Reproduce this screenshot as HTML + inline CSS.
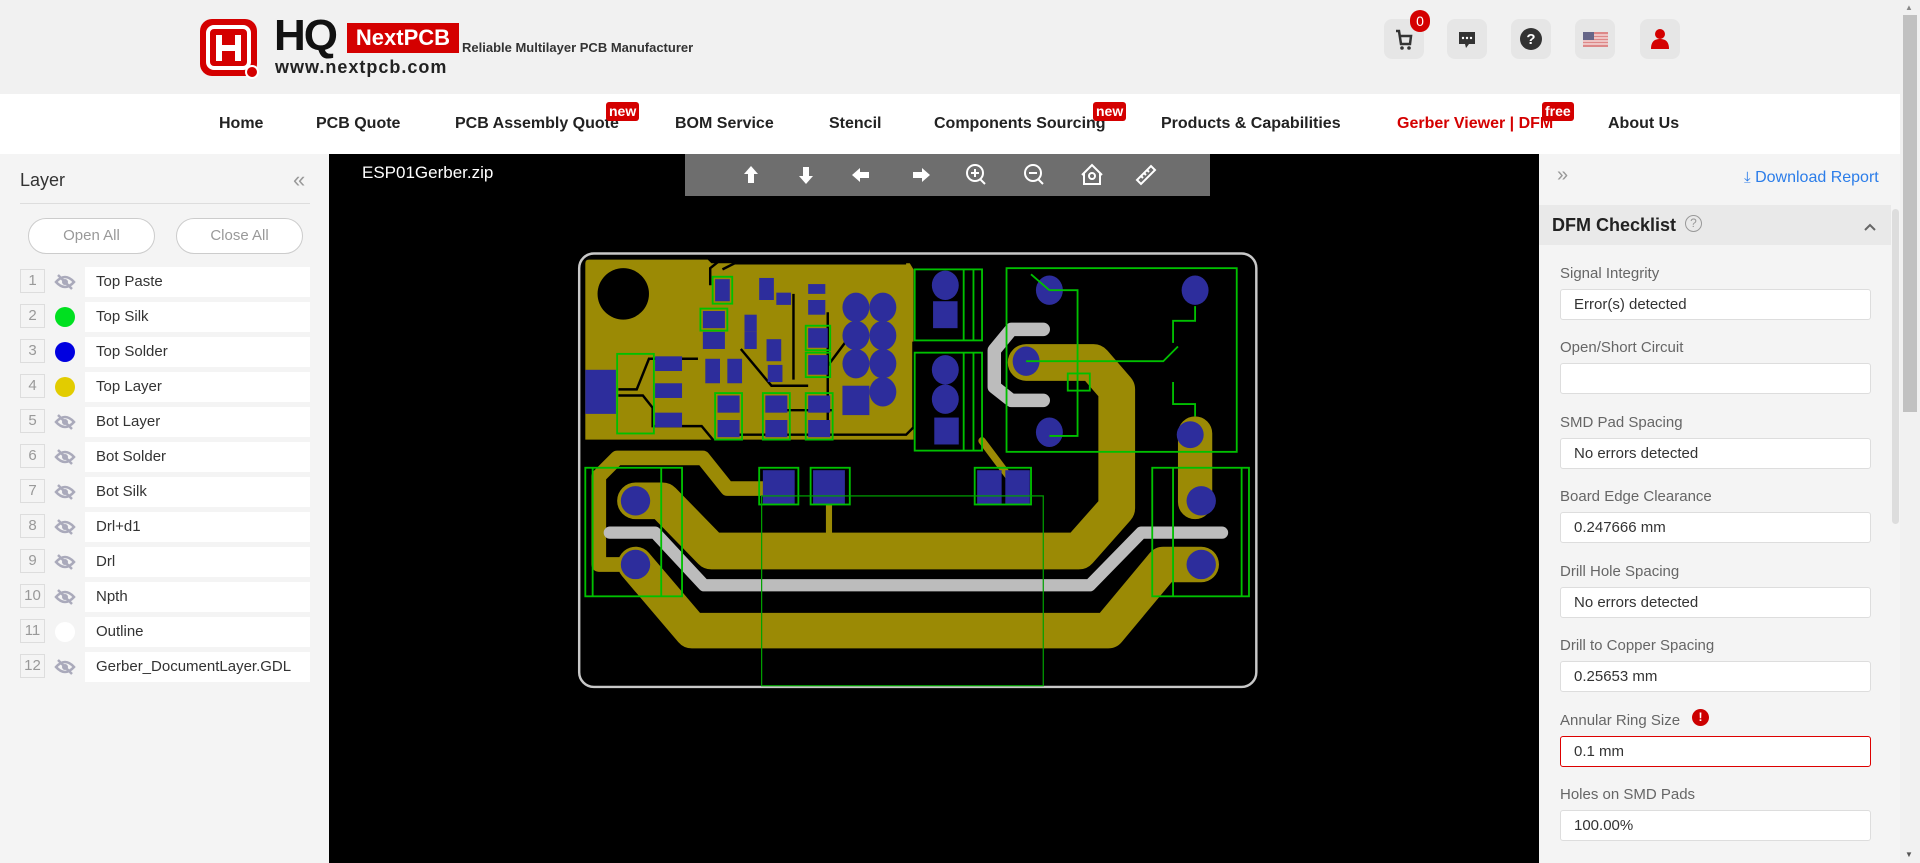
<!DOCTYPE html>
<html><head><meta charset="utf-8"><style>
*{box-sizing:border-box;margin:0;padding:0}
body{width:1920px;height:863px;overflow:hidden;font-family:"Liberation Sans",Arial,sans-serif;background:#f4f4f4;position:relative}
.abs{position:absolute}
#hdr{left:0;top:0;width:1900px;height:94px;background:#f1f1f1}
#nav{left:0;top:94px;width:1900px;height:60px;background:#fff}
.nv{position:absolute;top:115px;font-size:16px;font-weight:bold;color:#222;white-space:nowrap}
.bd{position:absolute;top:102px;height:19px;background:#d40000;color:#fff;font-size:14px;font-weight:bold;border-radius:3px;padding:0 3px;line-height:19px}
.ib{position:absolute;top:19px;width:40px;height:40px;background:#e6e6e6;border-radius:8px}
#left{left:0;top:154px;width:329px;height:709px;background:#f4f4f4}
.row{position:absolute;left:20px;height:30px;width:290px}
.num{position:absolute;left:0;top:2px;width:25px;height:24px;border:1px solid #ddd;color:#999;font-size:15px;text-align:center;line-height:22px}
.nm{position:absolute;left:65px;top:0;width:225px;height:30px;background:#fff;font-size:15px;color:#333;line-height:30px;padding-left:11px}
.dot{position:absolute;left:35px;top:5px;width:20px;height:20px;border-radius:50%}
.eye{position:absolute;left:34px;top:5px}
#canvas{left:329px;top:154px;width:1210px;height:709px;background:#000}
#right{left:1539px;top:154px;width:361px;height:709px;background:#f4f4f4}
.lb{position:absolute;left:21px;font-size:15px;color:#666}
.in{position:absolute;left:21px;width:311px;height:31px;background:#fff;border:1px solid #ddd;border-radius:3px;font-size:15px;color:#333;line-height:29px;padding-left:13px}
</style></head><body>
<div id="hdr" class="abs"></div>
<!-- logo -->
<svg class="abs" style="left:200px;top:19px" width="60" height="60" viewBox="0 0 60 60">
<rect x="0" y="0" width="57" height="57" rx="12" fill="#d40000"/>
<rect x="8" y="8" width="41" height="41" rx="6" fill="none" stroke="#fff" stroke-width="4"/>
<path d="M19 16v26M38 16v26M19 29h19" stroke="#fff" stroke-width="6" fill="none"/>
<circle cx="52" cy="53" r="6" fill="#d40000" stroke="#fff" stroke-width="2"/>
</svg>
<div class="abs" style="left:274px;top:14px;font-size:44px;font-weight:bold;color:#111;letter-spacing:-2px;line-height:44px">HQ</div>
<div class="abs" style="left:347px;top:23px;width:112px;height:30px;background:#d40000;color:#fff;font-size:22px;font-weight:bold;line-height:30px;text-align:center">NextPCB</div>
<div class="abs" style="left:275px;top:57px;font-size:18px;font-weight:bold;color:#222;letter-spacing:1px">www.nextpcb.com</div>
<div class="abs" style="left:462px;top:40px;font-size:13px;font-weight:bold;color:#333">Reliable Multilayer PCB Manufacturer</div>
<div class="ib" style="left:1384px"><svg width="40" height="40"><path d="M12 12h3l2 13h9l1-8h-11" fill="none" stroke="#333" stroke-width="2.5"/><circle cx="18" cy="29" r="1.8" fill="#333"/><circle cx="25" cy="29" r="1.8" fill="#333"/></svg></div>
<div class="abs" style="left:1410px;top:10px;width:20px;height:22px;border-radius:10px;background:#d40000;color:#fff;font-size:14px;text-align:center;line-height:22px">0</div>
<div class="ib" style="left:1447px"><svg width="40" height="40"><path d="M12 13h16v12h-6l-3 4-1-4h-6z" fill="#333"/><circle cx="16" cy="19" r="1.2" fill="#fff"/><circle cx="20" cy="19" r="1.2" fill="#fff"/><circle cx="24" cy="19" r="1.2" fill="#fff"/></svg></div>
<div class="ib" style="left:1511px"><svg width="40" height="40"><circle cx="20" cy="20" r="11" fill="#333"/><text x="20" y="25" font-size="15" font-weight="bold" fill="#fff" text-anchor="middle" font-family="Liberation Sans">?</text></svg></div>
<div class="ib" style="left:1575px"><svg width="40" height="40"><rect x="8" y="13" width="25" height="15" fill="#d88"/><path d="M8 16h25M8 19h25M8 22h25M8 25h25" stroke="#fff" stroke-width="1"/><rect x="8" y="13" width="11" height="8" fill="#668"/></svg></div>
<div class="ib" style="left:1640px"><svg width="40" height="40"><circle cx="20" cy="15" r="5" fill="#d40000"/><path d="M11 30c0-8 4-10 9-10s9 2 9 10z" fill="#d40000"/></svg></div>

<div id="nav" class="abs"></div>
<div class="nv" style="left:219px">Home</div>
<div class="nv" style="left:316px">PCB Quote</div>
<div class="nv" style="left:455px">PCB Assembly Quote</div>
<div class="bd" style="left:606px">new</div>
<div class="nv" style="left:675px">BOM Service</div>
<div class="nv" style="left:829px">Stencil</div>
<div class="nv" style="left:934px">Components Sourcing</div>
<div class="bd" style="left:1093px">new</div>
<div class="nv" style="left:1161px">Products &amp; Capabilities</div>
<div class="nv" style="left:1397px;color:#d40000;font-weight:bold">Gerber Viewer | DFM</div>
<div class="bd" style="left:1542px">free</div>
<div class="nv" style="left:1608px">About Us</div>

<div id="left" class="abs">
<div class="abs" style="left:20px;top:16px;font-size:18px;color:#333">Layer</div>
<div class="abs" style="left:293px;top:13px;font-size:22px;color:#999">«</div>
<div class="abs" style="left:20px;top:49px;width:290px;height:1px;background:#ddd"></div>
<div class="abs" style="left:28px;top:64px;width:127px;height:36px;border:1px solid #ccc;border-radius:18px;background:#fff;color:#999;font-size:15px;text-align:center;line-height:34px">Open All</div>
<div class="abs" style="left:176px;top:64px;width:127px;height:36px;border:1px solid #ccc;border-radius:18px;background:#fff;color:#999;font-size:15px;text-align:center;line-height:34px">Close All</div>
</div>
<div id="rows"></div>

<div id="canvas" class="abs"></div>
<div class="abs" style="left:362px;top:163px;font-size:17px;color:#fff">ESP01Gerber.zip</div>
<div class="abs" style="left:685px;top:154px;width:525px;height:42px;background:#6e6e6e"></div>
<svg class="abs" style="left:0;top:0" width="1920" height="863">
<g fill="#fff" stroke="none">
<path d="M751 166l-7 8h4v9h6v-9h4z"/>
<path d="M806 184l-7-8h4v-9h6v9h4z"/>
<path d="M852 175l8-7v4h9v6h-9v4z"/>
<path d="M930 175l-8-7v4h-9v6h9v4z"/>
</g>
<g fill="none" stroke="#fff" stroke-width="2">
<circle cx="975" cy="173" r="8"/><path d="M980 179l5 5M971 173h8M975 169v8"/>
<circle cx="1033" cy="173" r="8"/><path d="M1038 179l5 5M1029 173h8"/>
<path d="M1082 175l10-10 10 10M1084 173v11h16v-11"/><circle cx="1092" cy="176" r="3"/>
<path d="M1137 180l14-14 4 4-14 14z"/><path d="M1141 176l2 2M1144 173l2 2M1147 170l2 2"/>
</g>
<g transform="scale(1.22449)">
<rect x="473" y="207" width="553" height="354" rx="12" fill="none" stroke="#c8c8c8" stroke-width="2"/>
<!-- copper -->
<path d="M478 215q0-3 3-3h97l3 3h162l3 5v139H478z" fill="#9b8a05"/>
<circle cx="509" cy="240" r="21" fill="#000"/>
<g fill="none" stroke="#000" stroke-width="2">
<path d="M580 233v-14l10-8M590 220l10-5h140"/>
<path d="M505 318h15l10-25h40M505 323h20l8 10v15h40l10 12"/>
<path d="M605 285l25 30h30M648 240v70M676 255v90M630 335h50M600 355h140l6-6v-70"/>
<path d="M690 280l-15 20"/>
</g>
<g fill="none" stroke="#9b8a05" stroke-linejoin="round" stroke-linecap="round">
<path d="M519 409h22l40 41h300l31-35v-97l-19-22h-55" stroke-width="30"/>
<path d="M519 461l46 54h340l45-54h31" stroke-width="29"/>
<path d="M976 354v56" stroke-width="28"/>
<path d="M519 461h-30v-72l15-15h70l20 25h42" stroke-width="12"/>
<path d="M802 360l30 40" stroke-width="6"/>
<path d="M677 405v30" stroke-width="5"/>
</g>
<g fill="none" stroke="#bcbcbc" stroke-linecap="round" stroke-linejoin="round">
<path d="M852 269h-26l-14 17v30l14 11h26" stroke-width="11"/>
<path d="M498 435h37l40 43h315l42-43h66" stroke-width="10"/>
</g>
<!-- pads -->
<g fill="#2d2d9c">
<circle cx="519" cy="409" r="12"/><circle cx="519" cy="461" r="12"/>
<circle cx="981" cy="409" r="12"/><circle cx="981" cy="461" r="12"/><circle cx="972" cy="355" r="11"/>
<ellipse cx="857" cy="237" rx="11" ry="12"/><ellipse cx="976" cy="237" rx="11" ry="12"/><ellipse cx="838" cy="295" rx="11" ry="12"/><ellipse cx="857" cy="353" rx="11" ry="12"/>
<ellipse cx="699" cy="251" rx="11" ry="12"/><ellipse cx="721" cy="251" rx="11" ry="12"/><ellipse cx="699" cy="274" rx="11" ry="12"/><ellipse cx="721" cy="274" rx="11" ry="12"/><ellipse cx="699" cy="297" rx="11" ry="12"/><ellipse cx="721" cy="297" rx="11" ry="12"/><ellipse cx="721" cy="320" rx="11" ry="12"/>
<rect x="688" y="315" width="22" height="24"/>
<ellipse cx="772" cy="233" rx="11" ry="12"/><rect x="762" y="246" width="20" height="22"/>
<ellipse cx="772" cy="302" rx="11" ry="12"/><ellipse cx="772" cy="326" rx="11" ry="12"/><rect x="763" y="341" width="20" height="22"/>
<rect x="623" y="384" width="26" height="28"/><rect x="664" y="384" width="26" height="28"/><rect x="798" y="384" width="20" height="28"/><rect x="821" y="384" width="20" height="28"/>
<rect x="478" y="302" width="25" height="36"/>
<rect x="584" y="228" width="12" height="18"/><rect x="620" y="227" width="12" height="18"/><rect x="634" y="239" width="12" height="10"/><rect x="660" y="232" width="14" height="8"/><rect x="660" y="245" width="14" height="12"/>
<rect x="574" y="254" width="18" height="14"/><rect x="608" y="257" width="10" height="14"/><rect x="574" y="271" width="18" height="14"/><rect x="608" y="271" width="10" height="14"/><rect x="626" y="277" width="12" height="18"/><rect x="660" y="268" width="16" height="16"/>
<rect x="535" y="291" width="22" height="12"/><rect x="535" y="313" width="22" height="12"/><rect x="535" y="337" width="22" height="12"/>
<rect x="576" y="293" width="12" height="20"/><rect x="594" y="293" width="12" height="20"/><rect x="627" y="298" width="12" height="14"/><rect x="660" y="290" width="16" height="16"/>
<rect x="586" y="323" width="18" height="14"/><rect x="586" y="343" width="18" height="14"/><rect x="625" y="323" width="18" height="14"/><rect x="625" y="343" width="18" height="14"/><rect x="660" y="323" width="18" height="14"/><rect x="660" y="343" width="18" height="14"/>
</g>
<!-- silk -->
<g fill="none" stroke="#00c000" stroke-width="1.5">
<rect x="747" y="220" width="55" height="58"/><path d="M787 220v58M795 220v58"/>
<rect x="747" y="288" width="55" height="80"/><path d="M787 288v80M795 288v80"/>
<rect x="822" y="219" width="188" height="150"/>
<rect x="478" y="382" width="79" height="105"/><path d="M540 382v105M484 382v105"/>
<rect x="941" y="382" width="79" height="105"/><path d="M958 382v105M1014 382v105"/>
<rect x="504" y="289" width="30" height="65"/>
<path d="M857 237h23v119h-23M838 295h112l12-12M976 250v12h-18v18M958 312v18h18v10M842 224l15 13"/>
<rect x="872" y="305" width="18" height="14"/>
<rect x="620" y="382" width="32" height="30"/><rect x="662" y="382" width="32" height="30"/><rect x="796" y="382" width="46" height="30"/>
<rect x="582" y="226" width="16" height="22"/><rect x="572" y="252" width="22" height="18"/><rect x="658" y="266" width="20" height="20"/><rect x="658" y="288" width="20" height="20"/><rect x="584" y="321" width="22" height="38"/><rect x="623" y="321" width="22" height="38"/><rect x="658" y="321" width="22" height="38"/>
</g>
<rect x="622" y="405" width="230" height="155" fill="none" stroke="#00a000" stroke-width="1"/>
</g>
</svg>

<div id="right" class="abs">
<div class="abs" style="left:18px;top:10px;font-size:20px;color:#999">»</div>
<div class="abs" style="left:205px;top:15px;font-size:16px;color:#2b7de9"><span style="font-size:15px">⤓</span> Download Report</div>
<div class="abs" style="left:0;top:51px;width:352px;height:40px;background:#e9e9e9"></div>
<div class="abs" style="left:13px;top:61px;font-size:18px;font-weight:bold;color:#222">DFM Checklist</div>
<div class="abs" style="left:146px;top:61px;width:17px;height:17px;border:1px solid #999;border-radius:50%;color:#999;font-size:12px;text-align:center;line-height:15px">?</div>
<svg class="abs" style="left:324px;top:68px" width="14" height="10"><path d="M2 8l5-5 5 5" fill="none" stroke="#666" stroke-width="2"/></svg>
<div class="abs" style="left:353px;top:55px;width:7px;height:315px;background:#ddd;border-radius:4px"></div>
<div class="lb" style="top:111px">Signal Integrity</div><div class="in" style="top:135px">Error(s) detected</div>
<div class="lb" style="top:185px">Open/Short Circuit</div><div class="in" style="top:209px"></div>
<div class="lb" style="top:260px">SMD Pad Spacing</div><div class="in" style="top:284px">No errors detected</div>
<div class="lb" style="top:334px">Board Edge Clearance</div><div class="in" style="top:358px">0.247666 mm</div>
<div class="lb" style="top:409px">Drill Hole Spacing</div><div class="in" style="top:433px">No errors detected</div>
<div class="lb" style="top:483px">Drill to Copper Spacing</div><div class="in" style="top:507px">0.25653 mm</div>
<div class="lb" style="top:558px">Annular Ring Size</div>
<div class="abs" style="left:153px;top:555px;width:17px;height:17px;border-radius:50%;background:#c00;color:#fff;font-size:12px;font-weight:bold;text-align:center;line-height:17px">!</div>
<div class="in" style="top:582px;border-color:#d00">0.1 mm</div>
<div class="lb" style="top:632px">Holes on SMD Pads</div><div class="in" style="top:656px">100.00%</div>
</div>
<div class="abs" style="left:1900px;top:0;width:20px;height:863px;background:#f1f1f1"></div>
<div class="abs" style="left:1903px;top:15px;width:14px;height:397px;background:#c1c1c1"></div>
<div class="abs" style="left:1905px;top:3px;font-size:8px;color:#888">▲</div>
<div class="abs" style="left:1905px;top:850px;font-size:8px;color:#555">▼</div>

<div class="row" style="top:267px"><div class="num">1</div><svg class="eye" width="22" height="20"><path d="M2 10q9-10 18 0q-9 10-18 0z" fill="none" stroke="#aab" stroke-width="2.5"/><circle cx="11" cy="10" r="3" fill="#aab"/><path d="M4 3l14 14" stroke="#aab" stroke-width="2.5"/></svg><div class="nm">Top Paste</div></div>
<div class="row" style="top:302px"><div class="num">2</div><div class="dot" style="background:#00e020"></div><div class="nm">Top Silk</div></div>
<div class="row" style="top:337px"><div class="num">3</div><div class="dot" style="background:#0000e0"></div><div class="nm">Top Solder</div></div>
<div class="row" style="top:372px"><div class="num">4</div><div class="dot" style="background:#e2cc00"></div><div class="nm">Top Layer</div></div>
<div class="row" style="top:407px"><div class="num">5</div><svg class="eye" width="22" height="20"><path d="M2 10q9-10 18 0q-9 10-18 0z" fill="none" stroke="#aab" stroke-width="2.5"/><circle cx="11" cy="10" r="3" fill="#aab"/><path d="M4 3l14 14" stroke="#aab" stroke-width="2.5"/></svg><div class="nm">Bot Layer</div></div>
<div class="row" style="top:442px"><div class="num">6</div><svg class="eye" width="22" height="20"><path d="M2 10q9-10 18 0q-9 10-18 0z" fill="none" stroke="#aab" stroke-width="2.5"/><circle cx="11" cy="10" r="3" fill="#aab"/><path d="M4 3l14 14" stroke="#aab" stroke-width="2.5"/></svg><div class="nm">Bot Solder</div></div>
<div class="row" style="top:477px"><div class="num">7</div><svg class="eye" width="22" height="20"><path d="M2 10q9-10 18 0q-9 10-18 0z" fill="none" stroke="#aab" stroke-width="2.5"/><circle cx="11" cy="10" r="3" fill="#aab"/><path d="M4 3l14 14" stroke="#aab" stroke-width="2.5"/></svg><div class="nm">Bot Silk</div></div>
<div class="row" style="top:512px"><div class="num">8</div><svg class="eye" width="22" height="20"><path d="M2 10q9-10 18 0q-9 10-18 0z" fill="none" stroke="#aab" stroke-width="2.5"/><circle cx="11" cy="10" r="3" fill="#aab"/><path d="M4 3l14 14" stroke="#aab" stroke-width="2.5"/></svg><div class="nm">Drl+d1</div></div>
<div class="row" style="top:547px"><div class="num">9</div><svg class="eye" width="22" height="20"><path d="M2 10q9-10 18 0q-9 10-18 0z" fill="none" stroke="#aab" stroke-width="2.5"/><circle cx="11" cy="10" r="3" fill="#aab"/><path d="M4 3l14 14" stroke="#aab" stroke-width="2.5"/></svg><div class="nm">Drl</div></div>
<div class="row" style="top:582px"><div class="num">10</div><svg class="eye" width="22" height="20"><path d="M2 10q9-10 18 0q-9 10-18 0z" fill="none" stroke="#aab" stroke-width="2.5"/><circle cx="11" cy="10" r="3" fill="#aab"/><path d="M4 3l14 14" stroke="#aab" stroke-width="2.5"/></svg><div class="nm">Npth</div></div>
<div class="row" style="top:617px"><div class="num">11</div><div class="dot" style="background:#fff"></div><div class="nm">Outline</div></div>
<div class="row" style="top:652px"><div class="num">12</div><svg class="eye" width="22" height="20"><path d="M2 10q9-10 18 0q-9 10-18 0z" fill="none" stroke="#aab" stroke-width="2.5"/><circle cx="11" cy="10" r="3" fill="#aab"/><path d="M4 3l14 14" stroke="#aab" stroke-width="2.5"/></svg><div class="nm">Gerber_DocumentLayer.GDL</div></div>
</body></html>
